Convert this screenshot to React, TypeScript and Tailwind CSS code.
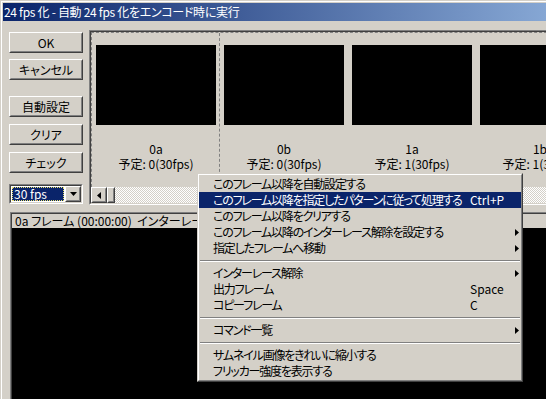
const FONT = "font-['Noto_Sans_CJK_JP','Noto_Sans_CJK_SC',sans-serif] [font-feature-settings:'palt']";

const raisedOuter = "border border-t-white border-l-white border-r-[#404040] border-b-[#404040]";
const raisedInner = "border border-t-[#d4d0c8] border-l-[#d4d0c8] border-r-[#808080] border-b-[#808080]";
const sunkenOuter = "border border-t-[#808080] border-l-[#808080] border-r-white border-b-white";
const sunkenInner = "border border-t-[#404040] border-l-[#404040] border-r-[#d4d0c8] border-b-[#d4d0c8]";

function Btn({ label, className }: { label: string; className?: string }) {
  return (
    <div className={`h-[21px] w-[74px] ${raisedOuter} ${className ?? ""}`}>
      <div className={`flex h-full w-full items-center justify-center ${raisedInner} text-[12px] leading-none text-black`}>
        {label}
      </div>
    </div>
  );
}

function SmallBtn({ className, children }: { className?: string; children?: React.ReactNode }) {
  return (
    <div className={`${raisedOuter} bg-[#d4d0c8] ${className ?? ""}`}>
      <div className={`flex h-full w-full items-center justify-center ${raisedInner}`}>{children}</div>
    </div>
  );
}

function Combo() {
  return (
    <div className={`mt-[11px] h-[20px] w-[74px] ${sunkenOuter}`}>
      <div className={`flex h-full ${sunkenInner} bg-white`}>
        <div className="m-[1px] flex flex-1 items-center bg-[#0a246a] pl-[2px] text-[12px] leading-none text-white outline-1 -outline-offset-1 outline-dotted outline-[#e8e070]">
          30 fps
        </div>
        <SmallBtn className="h-[16px] w-[16px] shrink-0">
          <svg width="7" height="4" viewBox="0 0 7 4">
            <path d="M0 0h7L3.5 4z" fill="#000" />
          </svg>
        </SmallBtn>
      </div>
    </div>
  );
}

const cells = [
  { name: "0a", plan: "予定: 0(30fps)" },
  { name: "0b", plan: "予定: 0(30fps)" },
  { name: "1a", plan: "予定: 1(30fps)" },
  { name: "1b", plan: "予定: 1(30fps)" },
];

function Cell({ name, plan, first }: { name: string; plan: string; first?: boolean }) {
  return (
    <div className={`h-full w-[128px] shrink-0 ${first ? "border-r border-dashed border-[#808080]" : ""}`}>
      <div className="ml-[4px] mt-[12px] h-[80px] w-[120px] bg-black" />
      <div className="ml-[4px] mt-[16px] w-[120px] text-center text-[12px] leading-[15px] text-black whitespace-nowrap">
        <div>{name}</div>
        <div>{plan}</div>
      </div>
    </div>
  );
}

function ThumbPanel() {
  return (
    <div className={`ml-[6px] h-[175px] w-[480px] shrink-0 ${sunkenOuter}`}>
      <div className={`flex h-full flex-col ${sunkenInner}`}>
        <div className="flex h-[155px] border-l border-t border-dashed border-[#808080]">
          {cells.map((c, i) => (
            <Cell key={c.name} {...c} first={i === 0} />
          ))}
        </div>
        <div className="flex h-[16px]">
          <SmallBtn className="h-[16px] w-[16px] shrink-0">
            <svg width="4" height="7" viewBox="0 0 4 7">
              <path d="M4 0v7L0 3.5z" fill="#000" />
            </svg>
          </SmallBtn>
          <SmallBtn className="h-[16px] w-[8px] shrink-0" />
          <div className="flex-1 [background-image:repeating-conic-gradient(#ffffff_0_25%,#d4d0c8_0_50%)] [background-size:2px_2px]" />
        </div>
      </div>
    </div>
  );
}

type Item = { label: string; key?: string; sub?: boolean; active?: boolean } | "sep";

const menu: Item[] = [
  { label: "このフレーム以降を自動設定する" },
  { label: "このフレーム以降を指定したパターンに従って処理する", key: "Ctrl+P", active: true },
  { label: "このフレーム以降をクリアする" },
  { label: "このフレーム以降のインターレース解除を設定する", sub: true },
  { label: "指定したフレームへ移動", sub: true },
  "sep",
  { label: "インターレース解除", sub: true },
  { label: "出力フレーム", key: "Space" },
  { label: "コピーフレーム", key: "C" },
  "sep",
  { label: "コマンド一覧", sub: true },
  "sep",
  { label: "サムネイル画像をきれいに縮小する" },
  { label: "フリッカー強度を表示する" },
];

function ContextMenu() {
  return (
    <div className="absolute left-[197px] top-[173px] w-[326px] border border-t-[#d4d0c8] border-l-[#d4d0c8] border-r-[#404040] border-b-[#404040] bg-[#d4d0c8]">
      <div className="border border-t-white border-l-white border-r-[#808080] border-b-[#808080] py-[1px]">
        {menu.map((it, i) =>
          it === "sep" ? (
            <div key={i} className="flex h-[9px] flex-col justify-center px-[1px]">
              <div className="h-[1px] bg-[#808080]" />
              <div className="h-[1px] bg-white" />
            </div>
          ) : (
            <div
              key={i}
              className={`flex h-[16px] items-center pl-[14px] pr-[2px] text-[12px] leading-none ${it.active ? "bg-[#0a246a] text-white" : "text-black"}`}
            >
              <span className="w-[257px] shrink-0 whitespace-nowrap tracking-[-1.2px]">{it.label}</span>
              {it.key && <span>{it.key}</span>}
              {it.sub && (
                <svg className="ml-auto" width="4" height="7" viewBox="0 0 4 7">
                  <path d="M0 0v7l4-3.5z" fill={it.active ? "#fff" : "#000"} />
                </svg>
              )}
            </div>
          )
        )}
      </div>
    </div>
  );
}

export default function App() {
  return (
    <div className={`relative h-[399px] w-[546px] overflow-hidden bg-[#d4d0c8] ${FONT}`}>
      <div className="ml-[1px] mt-[1px] flex h-[398px] flex-col border-l border-t border-white pl-[1px] pt-[1px]">
        <div className="flex h-[18px] shrink-0 items-center bg-[linear-gradient(90deg,#0a246a,#86a7d4)] pl-[1px] text-[12px] leading-none tracking-[-0.3px] text-white whitespace-nowrap">
          24 fps 化 - 自動 24 fps 化をエンコード時に実行
        </div>

        <div className="mt-[9px] flex shrink-0 items-start">
          <div className="ml-[6px] flex w-[74px] shrink-0 flex-col">
            <Btn label="OK" className="mt-[2px]" />
            <Btn label="キャンセル" className="mt-[6px]" />
            <Btn label="自動設定" className="mt-[16px]" />
            <Btn label="クリア" className="mt-[7px]" />
            <Btn label="チェック" className="mt-[7px]" />
            <Combo />
          </div>
          <ThumbPanel />
        </div>

        <div className="ml-[7px] mt-[7px] flex flex-1 flex-col border-l border-t border-[#808080]">
          <div className="flex flex-1 flex-col border-l border-t border-[#404040]">
            <div className="flex h-[14px] shrink-0 items-center bg-[#d4d0c8] pl-[3px] text-[12px] leading-none text-black whitespace-nowrap">
              0a フレーム (00:00:00)&nbsp;&nbsp;インターレース解除: なし
            </div>
            <div className="flex-1 bg-black" />
          </div>
        </div>
      </div>
      <ContextMenu />
    </div>
  );
}
